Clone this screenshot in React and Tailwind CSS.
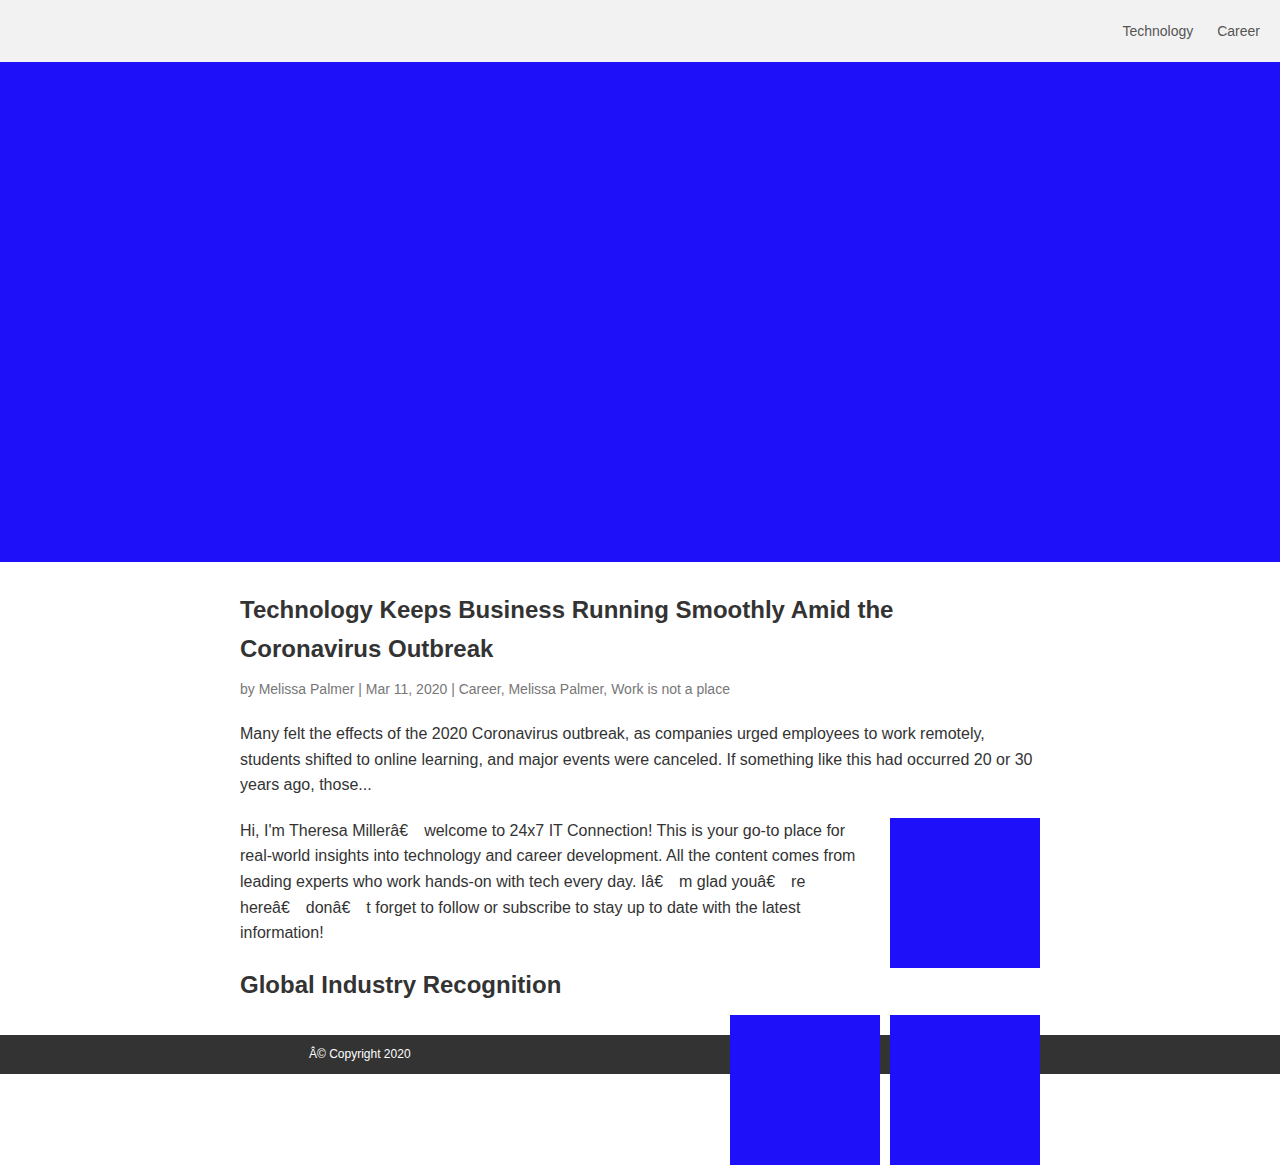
import React from 'react';

const font = { fontFamily: '"Liberation Sans", Arial, sans-serif' };

// broken-encoding separator as it shows on the page
const sep = 'â€\u2003';

function Square() {
  return <div className="w-[150px] h-[150px] shrink-0 bg-[#1e10f8]" />;
}

export default function App() {
  return (
    <div className="min-h-[1175px] bg-white text-[#333]" style={font}>
      {/* Header */}
      <header className="h-[62px] bg-[#f2f2f2] flex items-center justify-end pr-[20px]">
        <nav className="flex gap-[24px] text-[14px] text-[#555]">
          <a href="#">Technology</a>
          <a href="#">Career</a>
        </nav>
      </header>

      {/* Hero */}
      <div className="h-[500px] bg-[#1e10f8]" />

      {/* Content */}
      <main className="w-[800px] mx-auto pt-[28px]">
        <h1 className="text-[24px] leading-[39px] font-bold text-[#333] w-[700px]">
          Technology Keeps Business Running Smoothly Amid the Coronavirus Outbreak
        </h1>
        <p className="mt-[12px] text-[14px] leading-[18px] text-[#777]">
          by Melissa Palmer | Mar 11, 2020 | Career, Melissa Palmer, Work is not a place
        </p>
        <p className="mt-[23px] text-[16px] leading-[25.6px]">
          Many felt the effects of the 2020 Coronavirus outbreak, as companies urged employees to work remotely,
          students shifted to online learning, and major events were canceled. If something like this had occurred 20 or 30
          years ago, those...
        </p>

        <div className="mt-[20px] flex justify-between">
          <p className="w-[620px] text-[16px] leading-[25.6px]">
            {`Hi, I'm Theresa Miller${sep}welcome to 24x7 IT Connection! This is your go-to place for real-world insights into technology and career development. All the content comes from leading experts who work hands-on with tech every day. I${sep}m glad you${sep}re here${sep}don${sep}t forget to follow or subscribe to stay up to date with the latest information!`}
          </p>
          <Square />
        </div>

        <h2 className="text-[24px] leading-[30px] font-bold mt-[2px]">Global Industry Recognition</h2>

        <div className="relative z-10 h-[20px] mt-[15px] flex justify-end gap-[10px]">
          <Square />
          <Square />
        </div>
      </main>

      {/* Footer */}
      <footer className="h-[39px] bg-[#333] flex items-center pl-[309px]">
        <span className="text-[12px] text-white">Â© Copyright 2020</span>
      </footer>
    </div>
  );
}
